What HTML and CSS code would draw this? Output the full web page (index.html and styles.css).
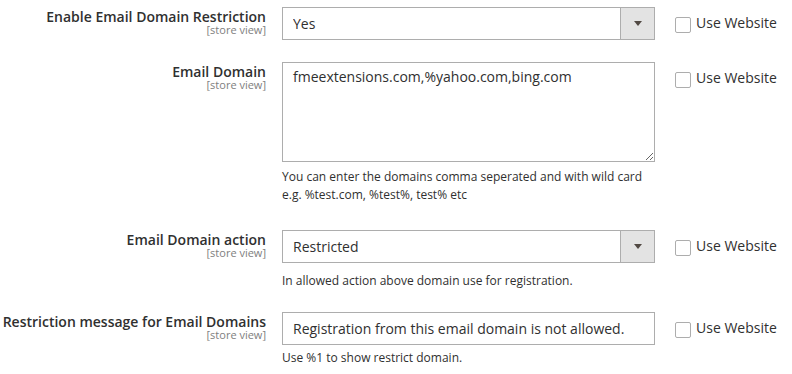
FILE: index.html
```html
<!DOCTYPE html>
<html lang="en">
<head>
    <meta charset="UTF-8">
    <meta name="viewport" content="width=device-width, initial-scale=1.0">
    <title>Email Domain Restriction - Configuration</title>
    <link rel="stylesheet" href="styles.css">
</head>
<body>

    <div class="config-form">

        <div class="field field-select">
            <div class="field-label">
                <span class="title">Enable Email Domain Restriction</span>
                <span class="scope">[store view]</span>
            </div>
            <div class="field-control">
                <div class="select-wrap">
                    <select>
                        <option selected>Yes</option>
                        <option>No</option>
                    </select>
                </div>
            </div>
            <label class="use-default">
                <input type="checkbox">
                <span>Use Website</span>
            </label>
        </div>

        <div class="field field-textarea">
            <div class="field-label">
                <span class="title">Email Domain</span>
                <span class="scope">[store view]</span>
            </div>
            <div class="field-control">
                <textarea>fmeextensions.com,%yahoo.com,bing.com</textarea>
                <p class="note">You can enter the domains comma seperated and with wild card<br>e.g. %test.com, %test%, test% etc</p>
            </div>
            <label class="use-default">
                <input type="checkbox">
                <span>Use Website</span>
            </label>
        </div>

        <div class="field field-select">
            <div class="field-label">
                <span class="title">Email Domain action</span>
                <span class="scope">[store view]</span>
            </div>
            <div class="field-control">
                <div class="select-wrap">
                    <select>
                        <option selected>Restricted</option>
                        <option>Allowed</option>
                    </select>
                </div>
                <p class="note">In allowed action above domain use for registration.</p>
            </div>
            <label class="use-default">
                <input type="checkbox">
                <span>Use Website</span>
            </label>
        </div>

        <div class="field field-text">
            <div class="field-label">
                <span class="title">Restriction message for Email Domains</span>
                <span class="scope">[store view]</span>
            </div>
            <div class="field-control">
                <input type="text" value="Registration from this email domain is not allowed.">
                <p class="note">Use %1 to show restrict domain.</p>
            </div>
            <label class="use-default">
                <input type="checkbox">
                <span>Use Website</span>
            </label>
        </div>

    </div>

</body>
</html>
```

FILE: styles.css
```css
/* Global styles */
body {
    font-family: 'Open Sans', 'Liberation Sans', sans-serif;
    background-color: #fff;
    color: #303030;
    margin: 0;
    padding: 0;
}

/* Form layout */
.config-form {
    padding-top: 7px;
}

.field {
    display: flex;
    align-items: flex-start;
    margin-bottom: 22px;
}

.field-textarea {
    margin-bottom: 26px;
}

.field-label {
    width: 266px;
    flex-shrink: 0;
    padding-top: 1px;
    text-align: right;
}

.field-label .title {
    display: block;
    font-size: 14px;
    font-weight: 600;
    line-height: 17px;
    white-space: nowrap;
}

.field-label .scope {
    display: block;
    font-size: 11px;
    line-height: 10px;
    color: #808080;
}

.field-control {
    width: 373px;
    flex-shrink: 0;
    margin-left: 16px;
}

/* Controls */
select,
textarea,
input[type="text"] {
    display: block;
    width: 100%;
    box-sizing: border-box;
    margin: 0;
    border: 1px solid #adadad;
    border-radius: 0;
    background-color: #fff;
    font-family: inherit;
    font-size: 14px;
    line-height: 19px;
    color: #303030;
    outline: none;
}

select,
input[type="text"] {
    height: 33px;
    padding: 0 10px;
}

select {
    appearance: none;
    -webkit-appearance: none;
    padding-right: 44px;
}

textarea {
    height: 100px;
    padding: 4px 10px;
    resize: vertical;
}

.select-wrap {
    position: relative;
}

.select-wrap::before {
    content: "";
    position: absolute;
    top: 1px;
    right: 1px;
    bottom: 1px;
    width: 33px;
    background-color: #e3e3e3;
    border-left: 1px solid #adadad;
    pointer-events: none;
}

.select-wrap::after {
    content: "";
    position: absolute;
    top: 14px;
    right: 13px;
    border-left: 4px solid transparent;
    border-right: 4px solid transparent;
    border-top: 5px solid #514943;
    pointer-events: none;
}

.note {
    margin: 6px 0 0;
    font-size: 12px;
    line-height: 18px;
    color: #303030;
}

.field-select .note {
    margin-top: 9px;
}

.field-text .note {
    margin-top: 4px;
}

/* Use Website checkbox */
.use-default {
    display: flex;
    align-items: flex-start;
    gap: 5px;
    margin-left: 20px;
    padding-top: 6px;
    font-size: 14px;
    line-height: 19px;
    white-space: nowrap;
}

.use-default input {
    appearance: none;
    -webkit-appearance: none;
    width: 16px;
    height: 16px;
    margin: 4px 0 0;
    border: 1px solid #adadad;
    border-radius: 2px;
    background-color: #fff;
    box-sizing: border-box;
}
```
